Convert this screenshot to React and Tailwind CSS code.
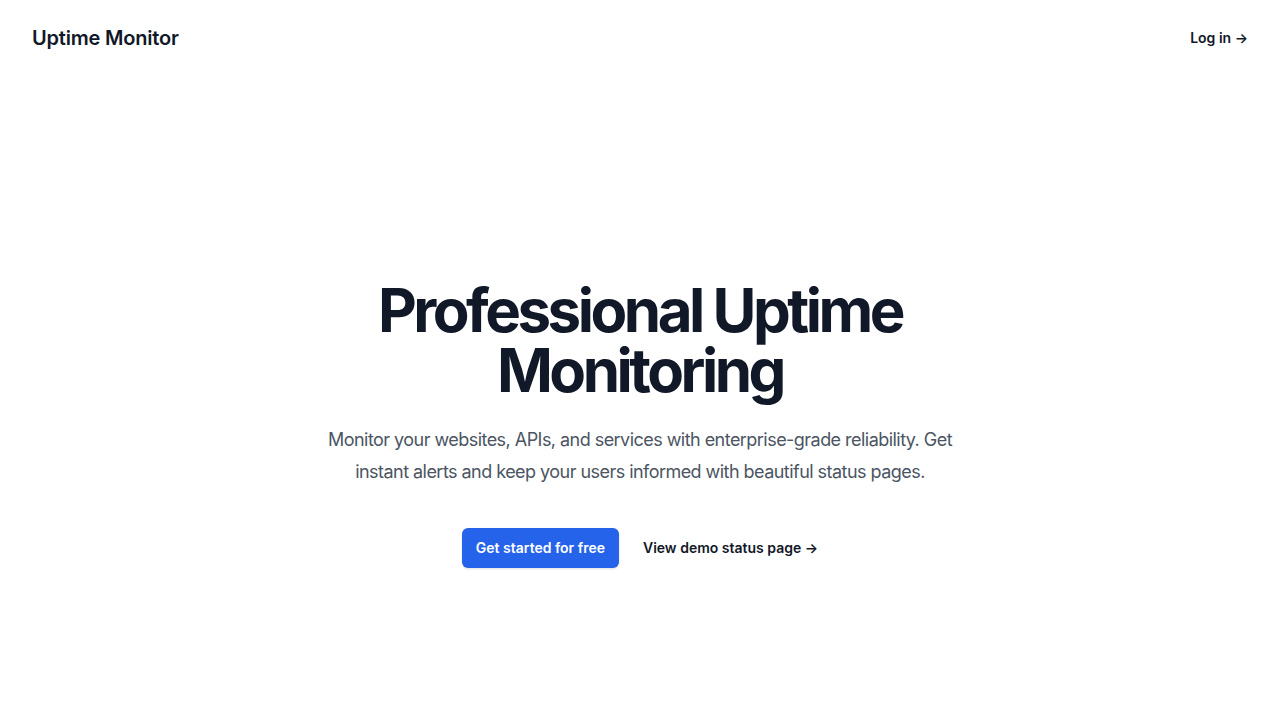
export default function App() {
  return (
    <div className="min-h-screen bg-white font-['Inter',sans-serif]">
      <header>
        <nav className="flex items-center justify-between p-6 px-8">
          <a href="#" className="text-xl font-semibold tracking-[-0.01em] text-[#111827]">Uptime Monitor</a>
          <a href="#" className="text-sm leading-6 font-semibold text-[#111827]">
            Log in <span aria-hidden="true">&rarr;</span>
          </a>
        </nav>
      </header>
      <main className="px-8">
        <div className="mx-auto max-w-2xl pt-[204px] text-center">
          <h1 className="text-6xl font-bold tracking-[-0.058em] text-[#111827]">
            Professional Uptime Monitoring
          </h1>
          <p className="mt-6 text-lg leading-8 tracking-[-0.03em] text-[#4b5563]">
            Monitor your websites, APIs, and services with enterprise-grade reliability. Get instant alerts and keep your users informed with beautiful status pages.
          </p>
          <div className="mt-10 flex items-center justify-center gap-x-6">
            <a href="#" className="rounded-md bg-[#2563eb] px-3.5 py-2.5 text-sm font-semibold text-white shadow-sm">
              Get started for free
            </a>
            <a href="#" className="text-sm leading-6 font-semibold text-[#111827]">
              View demo status page <span aria-hidden="true">&rarr;</span>
            </a>
          </div>
        </div>
      </main>
    </div>
  );
}
